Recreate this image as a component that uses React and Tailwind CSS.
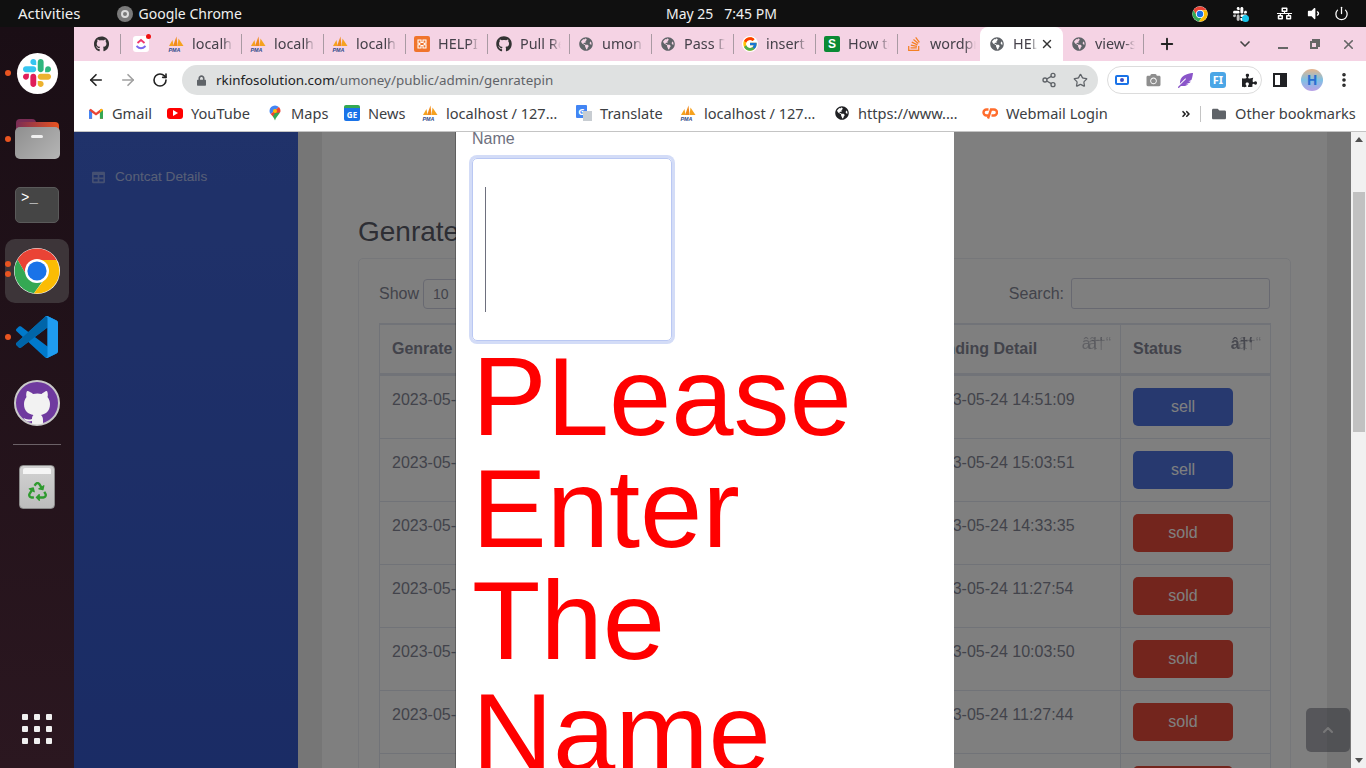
import React from "react";
import { FaGithub, FaGlobeAmericas, FaCamera, FaFeatherAlt, FaPuzzlePiece, FaRecycle, FaFolder, FaLock, FaStackOverflow, FaTable, FaNetworkWired, FaVolumeDown, FaAngleDoubleRight } from "react-icons/fa";
import { FcGoogle } from "react-icons/fc";
import { ArrowLeft, ArrowRight, RotateCw, Share2, Star, Plus, ChevronDown, ChevronUp, X, Power, EllipsisVertical } from "lucide-react";

const uiFont = "font-['Noto_Sans',sans-serif]";

const SlackLogo = ({ className }) => (
  <svg viewBox="0 0 122.8 122.8" className={className}>
    <path d="M25.8 77.6c0 7.1-5.8 12.9-12.9 12.9S0 84.7 0 77.6s5.8-12.9 12.9-12.9h12.9v12.9z" fill="#E01E5A" />
    <path d="M32.3 77.6c0-7.1 5.8-12.9 12.9-12.9s12.9 5.8 12.9 12.9v32.3c0 7.1-5.8 12.9-12.9 12.9s-12.9-5.8-12.9-12.9V77.6z" fill="#E01E5A" />
    <path d="M45.2 25.8c-7.1 0-12.9-5.8-12.9-12.9S38.1 0 45.2 0s12.9 5.8 12.9 12.9v12.9H45.2z" fill="#36C5F0" />
    <path d="M45.2 32.3c7.1 0 12.9 5.8 12.9 12.9s-5.8 12.9-12.9 12.9H12.9C5.8 58.1 0 52.3 0 45.2s5.8-12.9 12.9-12.9h32.3z" fill="#36C5F0" />
    <path d="M97 45.2c0-7.1 5.8-12.9 12.9-12.9s12.9 5.8 12.9 12.9-5.8 12.9-12.9 12.9H97V45.2z" fill="#2EB67D" />
    <path d="M90.5 45.2c0 7.1-5.8 12.9-12.9 12.9s-12.9-5.8-12.9-12.9V12.9C64.7 5.8 70.5 0 77.6 0s12.9 5.8 12.9 12.9v32.3z" fill="#2EB67D" />
    <path d="M77.6 97c7.1 0 12.9 5.8 12.9 12.9s-5.8 12.9-12.9 12.9-12.9-5.8-12.9-12.9V97h12.9z" fill="#ECB22E" />
    <path d="M77.6 90.5c-7.1 0-12.9-5.8-12.9-12.9s5.8-12.9 12.9-12.9h32.3c7.1 0 12.9 5.8 12.9 12.9s-5.8 12.9-12.9 12.9H77.6z" fill="#ECB22E" />
  </svg>
);

const ChromeLogo = ({ className }) => (
  <svg viewBox="0 0 48 48" className={className}>
    <circle cx="24" cy="24" r="23" fill="#fff" />
    <path d="M24 1.5A22.5 22.5 0 0 0 4.5 12.8L14.3 29.6A11 11 0 0 1 24 13H43.5A22.5 22.5 0 0 0 24 1.5Z" fill="#EA4335" />
    <path d="M4.5 12.8A22.5 22.5 0 0 0 21 46.3L30.4 33A11 11 0 0 1 14.3 29.6Z" fill="#34A853" />
    <path d="M43.5 13A22.5 22.5 0 0 1 21 46.3L33.6 29.6A11 11 0 0 0 24 13Z" fill="#FBBC04" />
    <circle cx="24" cy="24" r="12" fill="#fff" />
    <circle cx="24" cy="24" r="9.6" fill="#1A73E8" />
  </svg>
);

const VsCodeLogo = ({ className }) => (
  <svg viewBox="0 0 100 100" className={className}>
    <path fillRule="evenodd" d="M70.9119 99.3171C72.4869 99.9307 74.2828 99.8914 75.8725 99.1264L96.4608 89.2197C98.6242 88.1787 100 85.9892 100 83.5872V16.4133C100 14.0113 98.6243 11.8218 96.4609 10.7808L75.8725 0.873756C73.7862 -0.130129 71.3446 0.11576 69.5135 1.44695C69.252 1.63711 69.0028 1.84943 68.769 2.08341L29.3551 38.0415L12.1872 25.0096C10.589 23.7965 8.35363 23.8959 6.86933 25.2461L1.36303 30.2549C-0.452552 31.9064 -0.454633 34.7627 1.35853 36.417L16.2471 50.0001L1.35853 63.5832C-0.454633 65.2374 -0.452552 68.0938 1.36303 69.7453L6.86933 74.7541C8.35363 76.1043 10.589 76.2037 12.1872 74.9905L29.3551 61.9587L68.769 97.9167C69.3925 98.5406 70.1246 99.0104 70.9119 99.3171ZM75.0152 27.2989L45.1091 50.0001L75.0152 72.7012V27.2989Z" fill="#007ACC" />
    <path d="M96.4614 10.7962L75.8569 0.875542C73.4719 -0.272773 70.6217 0.211611 68.75 2.08333L1.29858 63.5832C-0.515693 65.2373 -0.513607 68.0937 1.30308 69.7452L6.81272 74.754C8.29793 76.1042 10.5347 76.2036 12.1338 74.9905L93.3609 13.3699C96.086 11.3026 100 13.2462 100 16.6667V16.4275C100 14.0265 98.6246 11.8378 96.4614 10.7962Z" fill="#0065A9" />
    <path d="M75.8578 99.1263C73.4721 100.274 70.6219 99.7885 68.75 97.9166C71.0564 100.223 75 98.5895 75 95.3278V4.67213C75 1.41039 71.0564 -0.223106 68.75 2.08329C70.6219 0.211402 73.4721 -0.273666 75.8578 0.873633L96.4587 10.7807C98.6234 11.8217 100 14.0112 100 16.4132V83.5871C100 85.9891 98.6234 88.1786 96.4586 89.2196L75.8578 99.1263Z" fill="#1F9CF0" />
  </svg>
);

// github desktop: octocat with no face, body runs off the bottom of the circle
const GithubDesktopLogo = () => (
  <svg viewBox="0 0 46 46" className="w-[46px] h-[46px]">
    <defs>
      <clipPath id="ghd-clip">
        <circle cx="23" cy="23" r="21.5" />
      </clipPath>
    </defs>
    <circle cx="23" cy="23" r="22" fill="#6f3a9f" stroke="#c9c9c9" strokeWidth="2" />
    <path clipPath="url(#ghd-clip)" d="M13 11C15 11 18 13 19 14C22 13.3 25 13.3 27.5 14C29 13 31 11 33 11C34 13 34 15.5 33.5 17C35 19 36 21 36 24C36 31 32 34 27 35C28.5 36 29 38 29 40V46H18V41C14 42 11 41 9.5 38C12 38.5 13 40.5 18 39V38.5C18 37 18.5 36 19.5 35C14 34 10 31 10 24C10 21 11 19 12.5 17C12 15.5 12 13 13 11Z" fill="#f2f2f2" />
  </svg>
);

const CpanelIcon = () => (
  <svg viewBox="0 0 16 12" className="w-4 h-3 shrink-0">
    <path d="M6.5 2.5H4.5a3 3 0 0 0 0 6H6" fill="none" stroke="#ff6c2c" strokeWidth="2.4" />
    <path d="M6 11.5L9 2.5H12a3 3 0 0 1 0 6H9.5" fill="none" stroke="#ff6c2c" strokeWidth="2.4" />
  </svg>
);

const PmaIcon = () => (
  <svg viewBox="0 0 16 16" className="w-4 h-4 shrink-0">
    <path d="M1 10 L4.5 4 L5.5 10Z" fill="#f6a21e" />
    <path d="M5 10 L8.5 0.5 L9.5 10Z" fill="#f08a1d" />
    <path d="M9.5 10 L10.5 2.5 L15.5 10Z" fill="#f6a21e" />
    <text x="0.5" y="15.5" fontSize="5.4" fontWeight="700" fontStyle="italic" fill="#2b4a8b" fontFamily="Liberation Sans">PMA</text>
  </svg>
);

const ClickUpIcon = () => (
  <div className="relative w-4 h-4 rounded-[3px] bg-white flex items-center justify-center shrink-0">
    <svg viewBox="0 0 16 16" className="w-4 h-4">
      <path d="M4.5 7 L8 4 L11.5 7" fill="none" stroke="#f0366a" strokeWidth="1.8" />
      <path d="M3.5 10 Q8 14.5 12.5 10" fill="none" stroke="#7b68ee" strokeWidth="1.8" />
    </svg>
    <span className="absolute -top-[2px] -right-[2px] w-[5px] h-[5px] rounded-full bg-[#f01010]" />
  </div>
);

const XamppIcon = () => (
  <div className="w-4 h-4 rounded-[2px] bg-[#f0742c] flex items-center justify-center shrink-0">
    <svg viewBox="0 0 12 12" className="w-3 h-3">
      <path d="M2 2h3v2.5h2V2h3v3.2H8.2v1.6H10V10H7V7.5H5V10H2V6.8h1.8V5.2H2Z" fill="none" stroke="#fff" strokeWidth="1.1" />
    </svg>
  </div>
);

const GreenS = () => (
  <div className="w-4 h-4 rounded-[2px] bg-[#0a8a34] text-white text-[12px] font-bold leading-4 text-center font-['Liberation_Sans',sans-serif] shrink-0">S</div>
);

const Globe = ({ className = "text-[#5f6368]" }) => <FaGlobeAmericas className={`w-[14px] h-[14px] mx-px shrink-0 ${className}`} />;

const tabs = [
  { icon: <PmaIcon />, text: "localhost" },
  { icon: <PmaIcon />, text: "localhost" },
  { icon: <PmaIcon />, text: "localhost" },
  { icon: <XamppIcon />, text: "HELPIER" },
  { icon: <FaGithub className="w-4 h-4 shrink-0 text-[#333]" />, text: "Pull Request" },
  { icon: <Globe />, text: "umoney" },
  { icon: <Globe />, text: "Pass Data" },
  { icon: <FcGoogle className="w-4 h-4 shrink-0 bg-white rounded-full" />, text: "insert into" },
  { icon: <GreenS />, text: "How to add" },
  { icon: <FaStackOverflow className="w-4 h-4 shrink-0 text-[#f48024]" />, text: "wordpress" },
];

const TabLabel = ({ text, className = "w-[42px]" }) => (
  <span className={`${className} overflow-hidden whitespace-nowrap text-[14.4px] text-[#45414a] [mask-image:linear-gradient(to_right,black_75%,transparent)]`}>{text}</span>
);

const TabStrip = () => (
  <div className={`h-[34px] bg-[#f5d3e4] flex items-end pl-2 ${uiFont}`}>
    <div className="w-[39px] h-[34px] flex items-center pl-3">
      <FaGithub className="w-4 h-4 text-[#333]" />
      <span className="ml-[11px] w-px h-5 bg-[#a99aa3]" />
    </div>
    <div className="w-[39px] h-[34px] flex items-center pl-3">
      <ClickUpIcon />
      <span className="ml-[11px] w-px h-5 bg-[#a99aa3]" />
    </div>
    {tabs.map((t, i) => (
      <div key={i} className="w-[82px] h-[34px] flex items-center pl-2 gap-2">
        {t.icon}
        <TabLabel text={t.text} className="w-[46px]" />
        {i < 9 && <span className="ml-auto w-px h-5 bg-[#a99aa3]" />}
      </div>
    ))}
    <div className="w-[83px] h-[34px] bg-white rounded-t-[8px] flex items-center pl-[9px] gap-2">
      <Globe />
      <TabLabel text="HELPIER" className="w-[24px]" />
      <X className="w-[14px] h-[14px] -ml-[5px] text-[#333]" strokeWidth={2.5} />
    </div>
    <div className="w-[81px] h-[34px] flex items-center pl-2 gap-2">
      <Globe />
      <TabLabel text="view-status" className="w-[43px]" />
      <span className="ml-auto w-px h-5 bg-[#a99aa3]" />
    </div>
    <div className="h-[34px] flex items-center flex-1">
      <Plus className="w-[18px] h-[18px] ml-[14px] text-[#222]" strokeWidth={2.5} />
      <ChevronDown className="w-4 h-4 ml-[61px] text-[#444]" strokeWidth={2.5} />
      <span className="ml-[25px] w-[10px] h-[2px] mt-2 bg-[#666]" />
      <div className="ml-[22px] relative w-[10px] h-[10px]">
        <span className="absolute top-0 right-0 w-2 h-2 border-2 border-[#666]" />
        <span className="absolute bottom-0 left-0 w-2 h-2 border-2 border-[#666] bg-[#f5d3e4]" />
      </div>
      <X className="w-[15px] h-[15px] ml-[21px] text-[#666]" strokeWidth={2.5} />
    </div>
  </div>
);

const Toolbar = () => (
  <div className={`h-[35px] pt-[3px] bg-white flex items-center pl-[13px] ${uiFont}`}>
    <ArrowLeft className="w-[18px] h-[18px] text-[#222]" strokeWidth={2.2} />
    <ArrowRight className="w-[18px] h-[18px] ml-[14px] text-[#a0a0a0]" strokeWidth={2.2} />
    <RotateCw className="w-4 h-4 ml-[15px] text-[#222]" strokeWidth={2.4} />
    <div className="ml-[14px] w-[916px] h-[30px] rounded-full bg-[#dfe1e1] flex items-center pl-[14px]">
      <FaLock className="w-[9px] h-[11px] text-[#5f6368] ml-[1px]" />
      <span className="ml-[10px] text-[13.4px] text-[#202124]">rkinfosolution.com<span className="text-[#5f6368]">/umoney/public/admin/genratepin</span></span>
      <Share2 className="w-4 h-4 ml-auto text-[#5f6368]" strokeWidth={2} />
      <Star className="w-[15px] h-[15px] ml-4 mr-[10px] text-[#5f6368]" strokeWidth={2} />
    </div>
    <div className="ml-[9px] w-[155px] h-[28px] rounded-full border border-[#dcdcdc] flex items-center pl-[7px]">
      <span className="w-[14px] h-[10px] rounded-[2px] border-2 border-[#1a73e8] flex items-center justify-center">
        <span className="w-1 h-1 rounded-full bg-[#3c4fc4]" />
      </span>
      <FaCamera className="w-[15px] h-[14px] ml-[17px] text-[#8e8e8e]" />
      <FaFeatherAlt className="w-[15px] h-[15px] ml-[17px] text-[#8a55c9]" />
      <span className="ml-[17px] w-4 h-4 rounded-[3px] bg-[#4ba6e6] text-white text-[11px] font-bold leading-4 text-center">FI</span>
      <FaPuzzlePiece className="w-[15px] h-[15px] ml-[16px] text-[#202124]" />
    </div>
    <span className="ml-[11px] w-[14px] h-[14px] border-2 border-[#202124] border-r-[7px]" />
    <div className="ml-[14px] w-[22px] h-[22px] rounded-full bg-[linear-gradient(180deg,#e6b48c_0%,#7fc0e4_50%,#b9a0e6_100%)] text-[#2a6fd0] text-[14px] font-bold leading-[22px] text-center">H</div>
    <EllipsisVertical className="w-[18px] h-[18px] ml-[12px] text-[#222]" strokeWidth={2.8} />
  </div>
);

const GmailIcon = () => (
  <svg viewBox="0 0 16 12" className="w-[14px] h-[11px] shrink-0">
    <path d="M0 2V12H3.5V5L8 8.4L12.5 5V12H16V2L14 0.5L8 5L2 0.5Z" fill="#EA4335" />
    <path d="M0 2V12H3.5V5Z" fill="#4285F4" />
    <path d="M16 2V12H12.5V5Z" fill="#34A853" />
    <path d="M12.5 5V1.7L14 0.5L16 2Z" fill="#FBBC04" />
  </svg>
);

const MapsIcon = () => (
  <svg viewBox="0 0 12 16" className="w-3 h-4 shrink-0">
    <path d="M6 0.5A5.5 5.5 0 0 0 0.5 6C0.5 7.2 1 8.2 1.6 9L9.8 2A5.5 5.5 0 0 0 6 0.5Z" fill="#4285F4" />
    <path d="M9.8 2L1.6 9L3.8 11.5L11 7.5C11.3 7 11.5 6.5 11.5 6C11.5 4.4 10.8 3 9.8 2Z" fill="#EA4335" />
    <path d="M3.8 11.5C4.8 12.8 5.6 14 6 15.5C6.6 13 9 10.5 11 7.5L6 8Z" fill="#34A853" />
    <circle cx="6" cy="6" r="2" fill="#FBBC04" />
  </svg>
);

const bookmarks = [
  { w: "w-[78px]", icon: <GmailIcon />, text: "Gmail", gap: "gap-[9px]" },
  { w: "w-[102px]", icon: <div className="w-4 h-[11px] rounded-[3px] bg-[#f00] flex items-center justify-center shrink-0"><span className="border-l-[5px] border-l-white border-y-[3px] border-y-transparent" /></div>, text: "YouTube", gap: "gap-2" },
  { w: "w-[75px]", icon: <MapsIcon />, text: "Maps", gap: "gap-[10px]" },
  { w: "w-[78px]", icon: <div className="w-4 h-4 rounded-[2px] bg-[#1a73e8] border-t-[3px] border-t-[#34a853] text-white text-[8px] font-bold leading-[13px] text-center shrink-0">GE</div>, text: "News", gap: "gap-2" },
  { w: "w-[154px]", icon: <PmaIcon />, text: "localhost / 127…", gap: "gap-2" },
  { w: "w-[104px]", icon: <div className="relative w-4 h-4 shrink-0"><span className="absolute top-0 left-0 w-[11px] h-[13px] rounded-[1px] bg-[#4285f4] text-white text-[9px] font-bold leading-[13px] text-center">G</span><span className="absolute bottom-0 right-0 w-[9px] h-[10px] bg-[#c8cdd2] -z-0" /></div>, text: "Translate", gap: "gap-2" },
  { w: "w-[154px]", icon: <PmaIcon />, text: "localhost / 127…", gap: "gap-2" },
  { w: "w-[148px]", icon: <Globe className="text-[#202124]" />, text: "https://www.…", gap: "gap-2" },
  { w: "w-[199px]", icon: <CpanelIcon />, text: "Webmail Login", gap: "gap-2" },
];

const BookmarksBar = () => (
  <div className={`h-[36px] bg-white border-b border-[#c4c4c4] flex items-center pl-[15px] text-[14.6px] text-[#3c4043] ${uiFont}`}>
    {bookmarks.map((b, i) => (
      <div key={i} className={`${b.w} shrink-0 flex items-center whitespace-nowrap ${b.gap}`}>
        {b.icon}
        <span>{b.text}</span>
      </div>
    ))}
    <FaAngleDoubleRight className="w-[10px] h-[10px] text-[#222] shrink-0" />
    <span className="ml-[9px] w-px h-4 bg-[#c4c4c4]" />
    <FaFolder className="ml-[11px] w-[14px] h-[14px] text-[#5f6368]" />
    <span className="ml-[9px] whitespace-nowrap">Other bookmarks</span>
  </div>
);

const rows = [
  { time: "14:51:09", status: "sell" },
  { time: "15:03:51", status: "sell" },
  { time: "14:33:35", status: "sold" },
  { time: "11:27:54", status: "sold" },
  { time: "10:03:50", status: "sold" },
  { time: "11:27:44", status: "sold" },
  { time: "09:12:30", status: "sold" },
];

// the page's broken arrow glyphs, both stacked in the same corner of the header cell
const SortMarks = ({ strong }) => (
  <span className="absolute top-[7px] right-[9px] text-[16px] leading-6 font-normal">
    <span className={strong ? "absolute right-[8px] top-0 font-bold opacity-90" : "absolute right-[8px] top-0 opacity-50"}>â†‘</span>
    <span className="opacity-40">â†“</span>
  </span>
);

const DataPanel = () => (
  <div className="flex-1 bg-[#ececec] px-6 min-w-0">
    <div className="h-full bg-white pl-9 pr-9 pt-[83px] text-[#858796] text-[16px]">
      <h1 className="text-[28px] leading-[34px] text-[#5a5c69]">Genrate Pin</h1>
      <div className="mt-[9px] w-[933px] rounded-[5px] border border-[#eceef5] pt-[19px] px-5">
        <div className="flex items-center justify-between h-[31px] mb-[14px]">
          <div className="flex items-center">
            <span>Show</span>
            <span className="ml-1 w-[75px] h-[30px] rounded-[4px] border border-[#d1d3e2] pl-[9px] text-[14px] leading-[28px]">10</span>
          </div>
          <div className="flex items-center">
            <span>Search:</span>
            <span className="ml-[7px] w-[199px] h-[31px] rounded-[3px] border border-[#d1d3e2]" />
          </div>
        </div>
        <table className="w-[891px] table-fixed border-collapse border-t-2 border-[#e3e6f0]">
          <thead>
            <tr className="h-[50px] border-b-[3px] border-[#e3e6f0] font-bold text-left">
              <th className="w-[534px] border-x border-[#e3e6f0] px-3 pt-px">Genrate Date</th>
              <th className="relative w-[207px] border-x border-[#e3e6f0] px-3 pt-px">Pending Detail<SortMarks /></th>
              <th className="relative w-[150px] border-x border-[#e3e6f0] px-3 pt-px">Status<SortMarks strong /></th>
            </tr>
          </thead>
          <tbody>
            {rows.map((r) => (
              <tr key={r.time} className="border-b border-[#e3e6f0] align-top">
                <td className="border-x border-[#e3e6f0] p-3 leading-6">2023-05-24 {r.time}</td>
                <td className="border-x border-[#e3e6f0] p-3 leading-6">2023-05-24 {r.time}</td>
                <td className="border-x border-[#e3e6f0] p-3">
                  <div className={`w-[100px] h-[38px] rounded-[5px] text-center text-white leading-[38px] ${r.status === "sell" ? "bg-[#4e73df]" : "bg-[#e74a3b]"}`}>{r.status}</div>
                </td>
              </tr>
            ))}
          </tbody>
        </table>
      </div>
    </div>
  </div>
);

const Modal = () => (
  <div className="absolute top-0 bottom-0 left-[382px] w-[498px] bg-white px-4 overflow-hidden shadow-[-1px_0_0_rgba(0,0,0,0.25)]">
    <label className="block -mt-[5px] mb-[7px] leading-6 text-[16px] text-[#6e707e]">Name</label>
    <div className="w-[200px] h-[183px] rounded-[5px] border border-[#bac8f3] shadow-[0_0_0_3px_#d3dcf7] flex items-center pl-3">
      <span className="w-px h-[125px] bg-[#6e707e]" />
    </div>
    <div className="text-[112px] leading-[112px] text-[#ff0000]">PLease Enter The Name</div>
  </div>
);

const Page = () => (
  <div className="flex-1 flex min-h-0 font-['Liberation_Sans',sans-serif]">
    <div className="relative flex-1 flex overflow-hidden min-w-0">
      <aside className="w-[224px] shrink-0 bg-[linear-gradient(180deg,#4064d4,#3558ca)] pl-[18px] pt-[35px]">
        <div className="flex items-center gap-[10px] text-[13.6px] text-white/60">
          <FaTable className="w-[13px] h-[13px] text-white/40" />
          <span>Contcat Details</span>
        </div>
      </aside>
      <DataPanel />
      <div className="absolute right-[1px] bottom-4 w-11 h-11 rounded-[5px] bg-[rgba(90,92,105,0.5)] flex items-center justify-center z-0">
        <ChevronUp className="w-4 h-4 text-white/80" strokeWidth={3} />
      </div>
      <div className="absolute inset-0 bg-black/50" />
      <Modal />
    </div>
    <div className="w-[15px] shrink-0 bg-[#f1f1f1] flex flex-col items-center">
      <span className="mt-[5px] border-x-[4px] border-x-transparent border-b-[5px] border-b-[#505050]" />
      <span className="mt-[50px] w-3 h-[240px] bg-[#c1c1c1]" />
      <span className="mt-auto mb-[5px] border-x-[4px] border-x-transparent border-t-[5px] border-t-[#505050]" />
    </div>
  </div>
);

const Dot = ({ className }) => <span className={`absolute left-[5px] w-[6px] h-[6px] rounded-full bg-[#e95420] ${className}`} />;

const Dock = () => (
  <div className="relative w-[74px] shrink-0 bg-[linear-gradient(180deg,#1a0e15,#2b1720)] flex flex-col items-center pt-[13px]">
    <div className="relative w-full h-[66px] flex items-center justify-center">
      <Dot className="top-[30px]" />
      <div className="w-[41px] h-[41px] rounded-full bg-white flex items-center justify-center">
        <SlackLogo className="w-[28px] h-[28px]" />
      </div>
    </div>
    <div className="relative w-full h-[66px] flex items-center justify-center">
      <Dot className="top-[30px]" />
      <div className="relative w-[45px] h-[40px]">
        <div className="absolute top-0 left-[1px] w-[20px] h-6 rounded-t-[4px] bg-[#7a2d55]" />
        <div className="absolute top-[3px] left-[1px] w-[43px] h-6 rounded-t-[4px] bg-[linear-gradient(90deg,#7a2d55,#e95420)]" />
        <div className="absolute bottom-0 left-0 w-[45px] h-[32px] rounded-[5px] bg-[linear-gradient(135deg,#8f8f8f,#b5b5b5)] flex justify-center pt-[8px]">
          <span className="w-3 h-[3px] rounded-sm bg-[#f0f0f0]" />
        </div>
      </div>
    </div>
    <div className="w-full h-[66px] flex items-center justify-center">
      <div className="w-[44px] h-[36px] rounded-[5px] bg-[#454545] border border-[#5a5a5a] text-white text-[14px] leading-none pl-[5px] pt-[3px] font-['Liberation_Mono',monospace]">&gt;_</div>
    </div>
    <div className="relative w-full h-[66px] flex items-center justify-center">
      <Dot className="top-[23px]" />
      <Dot className="top-[33px]" />
      <div className="w-[64px] h-[64px] rounded-[10px] bg-[#3d3539] flex items-center justify-center">
        <ChromeLogo className="w-[48px] h-[48px]" />
      </div>
    </div>
    <div className="relative w-full h-[66px] flex items-center justify-center">
      <Dot className="top-[30px]" />
      <VsCodeLogo className="w-[42px] h-[42px]" />
    </div>
    <div className="w-full h-[66px] flex items-center justify-center">
      <GithubDesktopLogo />
    </div>
    <span className="mt-2 w-12 h-px bg-[#6b6167]" />
    <div className="w-full h-[66px] mt-[9px] flex items-center justify-center">
      <div className="relative w-[36px] h-[44px] rounded-[4px] bg-[linear-gradient(180deg,#d2d2d2,#bdbdbd)] border border-[#8a8a8a] flex items-end justify-center pb-[7px]">
        <span className="absolute top-[2px] left-[3px] w-[28px] h-[6px] rounded-t-[2px] bg-[#f5f5f5]" />
        <FaRecycle className="w-[19px] h-[19px] text-[#2f9a2f]" />
      </div>
    </div>
    <div className="mt-auto mb-[24px] grid grid-cols-3 gap-[6px]">
      {[...Array(9)].map((_, i) => (
        <span key={i} className="w-[6px] h-[6px] rounded-[1px] bg-[#f0f0f0]" />
      ))}
    </div>
  </div>
);

const TopBar = () => (
  <div className={`h-[27px] bg-[#101010] flex items-center text-[14px] text-[#f0f0f0] ${uiFont}`}>
    <div className="w-[666px] flex items-center pl-[18px]">
      <span className="text-[15px]">Activities</span>
      <span className="ml-9 w-4 h-4 rounded-full bg-[#7a7a7a] flex items-center justify-center">
        <span className="w-2 h-2 rounded-full border-2 border-[#dcdcdc]" />
      </span>
      <span className="ml-[6px]">Google Chrome</span>
    </div>
    <span className="w-[109px] text-center whitespace-pre">May 25   7:45 PM</span>
    <div className="flex-1 flex items-center">
      <ChromeLogo className="w-4 h-4 ml-[417px]" />
      <div className="relative ml-[25px]">
        <SlackLogo className="w-[14px] h-[14px] [filter:grayscale(1)_brightness(2.5)]" />
        <span className="absolute -bottom-[1px] -right-[2px] w-[7px] h-[7px] rounded-full bg-[#18c5ea]" />
      </div>
      <FaNetworkWired className="w-[15px] h-[15px] ml-[30px] text-white" />
      <FaVolumeDown className="w-[15px] h-[15px] ml-[14px] text-white" />
      <Power className="w-[15px] h-[15px] ml-[13px] text-white" strokeWidth={2} />
    </div>
  </div>
);

export default function App() {
  return (
    <div className="w-[1366px] h-[768px] overflow-hidden flex flex-col">
      <TopBar />
      <div className="flex-1 flex min-h-0">
        <Dock />
        <div className="flex-1 flex flex-col min-w-0">
          <TabStrip />
          <Toolbar />
          <BookmarksBar />
          <Page />
        </div>
      </div>
    </div>
  );
}
